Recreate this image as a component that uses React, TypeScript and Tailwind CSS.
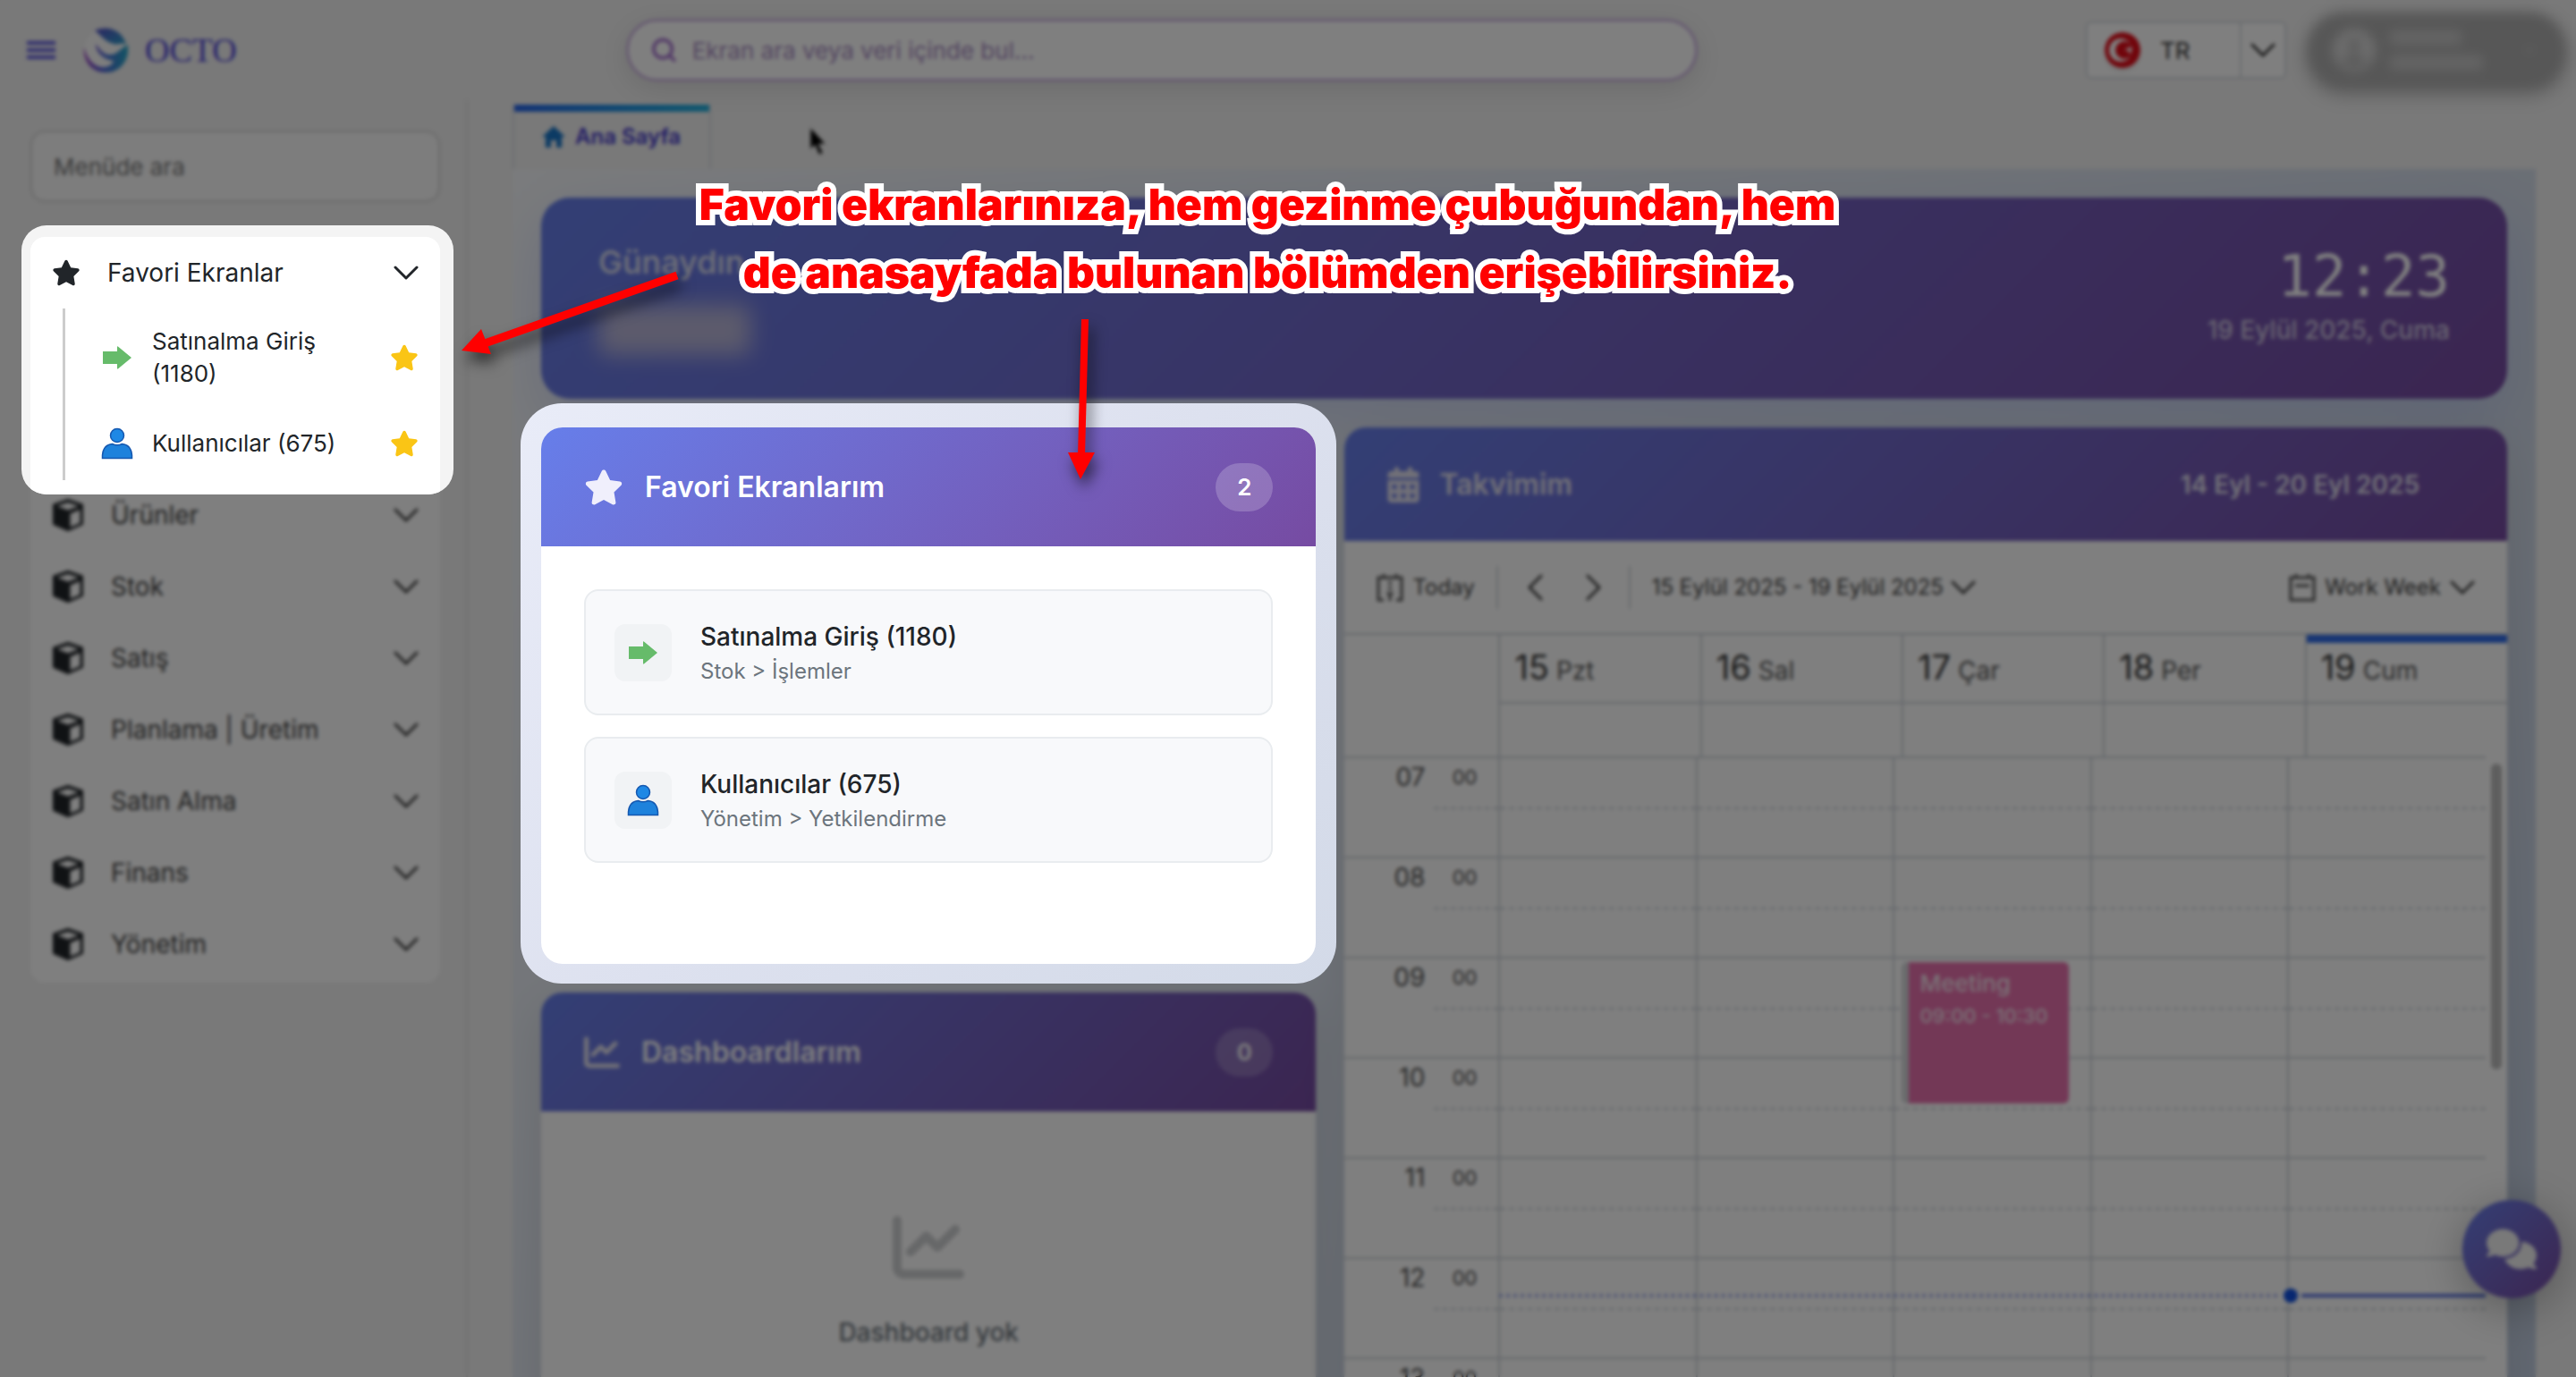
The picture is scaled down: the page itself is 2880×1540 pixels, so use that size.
import type { ReactNode } from "react";
import { ChevronDown, Search } from "lucide-react";
import { FaStar, FaChartLine, FaCalendarDays, FaComments, FaCircleUser } from "react-icons/fa6";
import { IoMdHome } from "react-icons/io";

const modules = ["Ürünler", "Stok", "Satış", "Planlama | Üretim", "Satın Alma", "Finans", "Yönetim"];

const days = [
  { num: "15", name: "Pzt" },
  { num: "16", name: "Sal" },
  { num: "17", name: "Çar" },
  { num: "18", name: "Per" },
  { num: "19", name: "Cum" },
];

const hours = ["07", "08", "09", "10", "11", "12", "13"];

function DownIcon() {
  return (
    <svg viewBox="0 0 28 16" className="h-4 w-7 shrink-0" fill="none" stroke="currentColor" strokeWidth="3" strokeLinecap="round" strokeLinejoin="round" aria-hidden="true">
      <path d="m2 2 12 12L26 2" />
    </svg>
  );
}

function LeftIcon() {
  return (
    <svg viewBox="0 0 18 30" className="h-[30px] w-[18px]" fill="none" stroke="currentColor" strokeWidth="3" strokeLinecap="round" strokeLinejoin="round" aria-hidden="true">
      <path d="M16 2 3 15l13 13" />
    </svg>
  );
}

function RightIcon() {
  return (
    <svg viewBox="0 0 18 30" className="h-[30px] w-[18px]" fill="none" stroke="currentColor" strokeWidth="3" strokeLinecap="round" strokeLinejoin="round" aria-hidden="true">
      <path d="m2 2 13 13L2 28" />
    </svg>
  );
}

function CubeIcon() {
  return (
    <svg viewBox="0 0 36 36" className="size-9 shrink-0" aria-hidden="true">
      <path d="M18 1 34 6.5V28L18 35 2 28V6.5Z" fill="#212529" stroke="#212529" strokeWidth="2" strokeLinejoin="round" />
      <path d="M18 4 30 8 18 12.5 6 8Z" fill="#fff" />
      <path d="M20.500 16.500 31.500 12V27L20.500 31.500Z" fill="#fff" />
    </svg>
  );
}

function ArrowIcon() {
  return (
    <svg viewBox="0 0 36 36" className="size-9 shrink-0" aria-hidden="true">
      <path d="M2 11h16V6.500q0-2 1.500-.5L34 18 19.500 30q-1.500 1.500-1.500-.5V25H2Z" fill="#66bb6a" />
    </svg>
  );
}

function PersonIcon() {
  return (
    <svg viewBox="0 0 36 36" className="size-9 shrink-0" aria-hidden="true">
      <circle cx="18" cy="9" r="7.500" fill="#1e88e5" stroke="#1558b0" strokeWidth="1.500" />
      <path d="M1.500 34.500V31q1-11.500 11-12.500 5.500 2.500 11 0 10 1 11 12.500v3.500Z" fill="#1e82dc" stroke="#1558b0" strokeWidth="1.500" />
    </svg>
  );
}

function Logo() {
  return (
    <svg viewBox="0 0 50 50" className="size-[50px]" aria-hidden="true">
      <defs>
        <linearGradient id="logoTop" x1="0" y1="0" x2="1" y2="1">
          <stop offset="0" stopColor="#5a50c8" />
          <stop offset="1" stopColor="#2aa0c8" />
        </linearGradient>
        <linearGradient id="logoBottom" x1="0" y1="0" x2="1" y2="0">
          <stop offset="0" stopColor="#9a35c0" />
          <stop offset=".45" stopColor="#4f6ad8" />
          <stop offset="1" stopColor="#22a8c8" />
        </linearGradient>
      </defs>
      <circle cx="25" cy="25" r="24" fill="#fbfbfb" />
      <path d="M13 3C28-4 45 4 48 19c-6-3-9 1-14-1C25 16 20 9 13 3Z" fill="url(#logoTop)" />
      <path d="M1 22C4 34 10 42 20 44c8 1 13-3 14-7C24 36 14 28 14 18c6 9 11 13 17 12 7 0 9-6 19-11 2 17-8 31-25 31C10 50 0 38 1 22Z" fill="url(#logoBottom)" />
    </svg>
  );
}

function TodayIcon() {
  return (
    <svg viewBox="0 0 30 32" className="h-8 w-[30px]" fill="none" stroke="#555" strokeWidth="3" aria-hidden="true">
      <path d="M8 30H2V5h26v25h-6M8 1v5M22 1v5M15 9v4" />
      <path d="M15 15v4M15 22v9" />
      <path d="M11 22h8l-4 4Z" fill="#555" strokeWidth="1" />
    </svg>
  );
}

function WorkWeekIcon() {
  return (
    <svg viewBox="0 0 30 32" className="h-8 w-[30px]" fill="none" stroke="#555" strokeWidth="3" aria-hidden="true">
      <path d="M2 5h26v25H2ZM8 1v5M22 1v5M7 14h16" />
    </svg>
  );
}

function Header() {
  return (
    <header className="grid h-[112px] shrink-0 grid-cols-[700px_minmax(0,1fr)_982px] items-center">
      <div className="flex items-center pl-[30px]">
        <button aria-label="Menü" className="flex w-8 flex-col gap-1">
          <span className="h-1 bg-[#5b55dd]" />
          <span className="h-1 bg-[#5b55dd]" />
          <span className="h-1 bg-[#5b55dd]" />
        </button>
        <a href="#" className="ml-[31px] flex items-center gap-[19px]">
          <Logo />
          <span className="font-['Liberation_Serif',serif] text-[38px] leading-none text-[#4c43d6]">OCTO</span>
        </a>
      </div>
      <label className="flex h-[70px] items-center gap-4 rounded-full border-[3px] border-[#cdb4e2] bg-white px-6 shadow-[0_8px_30px_rgba(0,0,0,0.1)]">
        <Search className="size-8 text-[#a877d0]" strokeWidth={3} />
        <input aria-label="Ekran ara" placeholder="Ekran ara veya veri içinde bul..." className="w-full bg-transparent text-[26px] outline-none placeholder:text-[#a58abf]" />
      </label>
      <div className="flex items-center justify-end gap-6 pr-3">
        <div className="flex h-16 w-[224px] items-center rounded-md border-2 border-[#d3d8dd] bg-white">
          <svg viewBox="0 0 40 40" className="ml-[19px] size-10 rounded-full shadow-md" aria-hidden="true">
            <circle cx="20" cy="20" r="20" fill="#e30a17" />
            <circle cx="18" cy="20" r="13" fill="#fff" />
            <circle cx="22" cy="20" r="10" fill="#e30a17" />
            <path d="m22 20 9-4-2 9-5-8 7 4Z" fill="#fff" />
          </svg>
          <span className="ml-[22px] text-[26px] text-[#333]">TR</span>
          <button aria-label="Dil seç" className="ml-auto flex h-full w-[50px] items-center justify-center border-l-2 border-[#d3d8dd] text-[#333]">
            <DownIcon />
          </button>
        </div>
        <div className="w-[288px]">
          <div className="flex h-[84px] items-center gap-4 rounded-[40px] bg-[#aeaeae] px-7 shadow-[0_6px_18px_rgba(0,0,0,0.3)] blur-[6px]">
            <FaCircleUser className="size-12 text-[#dadada]" />
            <div className="flex flex-1 flex-col gap-3">
              <span className="h-4 w-20 rounded bg-[#cacaca]" />
              <span className="h-4 w-26 rounded bg-[#cacaca]" />
            </div>
            <ChevronDown className="size-6 text-[#cccccc]" />
          </div>
        </div>
      </div>
    </header>
  );
}

function FavoriteRow({ icon, label }: { icon: ReactNode; label: string }) {
  return (
    <li className="flex items-center py-3">
      {icon}
      <a href="#" className="ml-[21px] w-[220px] text-[26px] leading-9 text-[#212529]">{label}</a>
      <button aria-label={`${label} favorilerden çıkar`} className="ml-auto">
        <FaStar className="size-8 text-[#fac515]" />
      </button>
    </li>
  );
}

function Sidebar() {
  return (
    <aside className="w-[523px] shrink-0 border-r-2 border-[#e2e2e2] pr-[29px] pl-[34px]">
      <input aria-label="Menüde ara" placeholder="Menüde ara" className="mt-[34px] h-20 w-full rounded-2xl border-2 border-[#d4d4d4] bg-[#fafafa] px-6 text-[26px] outline-none placeholder:text-[#777]" />
      <nav className="mt-[39px] rounded-2xl bg-white pb-[3px]">
        <div className="relative z-20 h-[271px]">
          <div className="absolute -top-[13px] -right-[15px] -bottom-[17px] -left-[10px] overflow-hidden rounded-[28px] bg-[#f4f4f4] pt-[13px] pr-[15px] pl-[10px]">
            <div className="h-full rounded-t-2xl bg-white" />
          </div>
          <div className="relative">
            <button className="flex h-20 w-full items-center pr-6 pl-6 text-[28px] text-[#212529]">
              <FaStar className="size-8" />
              <span className="ml-[30px]">Favori Ekranlar</span>
              <span className="ml-auto"><DownIcon /></span>
            </button>
            <ul className="ml-9 flex h-[192px] flex-col gap-[18px] border-l-[3px] border-[#ccc] pt-[7px] pr-6 pl-10">
              <FavoriteRow icon={<ArrowIcon />} label="Satınalma Giriş (1180)" />
              <FavoriteRow icon={<PersonIcon />} label="Kullanıcılar (675)" />
            </ul>
          </div>
        </div>
        {modules.map((name) => (
          <button key={name} className="flex h-20 w-full items-center pr-6 pl-6 text-[28px] text-[#404040]">
            <CubeIcon />
            <span className="ml-[30px]">{name}</span>
            <span className="ml-auto"><DownIcon /></span>
          </button>
        ))}
      </nav>
    </aside>
  );
}

function Banner() {
  return (
    <section className="flex h-[225px] shrink-0 justify-between rounded-[32px] bg-linear-135 from-[#667eea] to-[#764ba2] px-16 shadow-[0_20px_60px_rgba(102,126,234,0.2)]">
      <div className="pt-12">
        <h1 className="text-[36px] leading-[48px] font-medium text-[#e0e2f2]">Günaydın,</h1>
        <div className="mt-6 h-14 w-[170px] rounded-lg bg-[#b9b6d8] blur-md" />
      </div>
      <div className="pt-12 text-right">
        <p className="font-['DejaVu_Sans_Mono',monospace] text-[64px] leading-[80px] text-white">12:23</p>
        <p className="text-[28px] leading-10 font-medium text-[#d0c8e2]">19 Eylül 2025, Cuma</p>
      </div>
    </section>
  );
}

function CardHeader({ icon, title, count }: { icon: ReactNode; title: string; count: string }) {
  return (
    <div className="flex h-[133px] items-center bg-linear-135 from-[#667eea] to-[#764ba2] px-12 text-white">
      {icon}
      <h2 className="ml-6 text-[32px] font-semibold">{title}</h2>
      <span className="ml-auto flex h-[54px] w-16 items-center justify-center rounded-full bg-white/20 text-[26px] font-semibold">{count}</span>
    </div>
  );
}

function FavoriteItem({ icon, title, path }: { icon: ReactNode; title: string; path: string }) {
  return (
    <a href="#" className="flex h-[141px] items-center rounded-2xl border-2 border-[#e9ecef] bg-[#f8f9fb] px-8">
      <span className="flex size-16 items-center justify-center rounded-xl bg-[#f1f3f5]">{icon}</span>
      <span className="ml-8 flex flex-col">
        <span className="text-[28px] leading-[42px] font-medium text-[#212529]">{title}</span>
        <span className="text-[24px] leading-9 text-[#6c757d]">{path}</span>
      </span>
    </a>
  );
}

function FavoritesCard() {
  return (
    <section className="relative z-20">
      <div className="absolute -inset-x-[23px] -top-[27px] -bottom-[22px] rounded-[46px] bg-linear-135 from-[#e9ecf8] via-[#dde1ef] to-[#d3dae8]" />
      <div className="relative h-[600px] overflow-hidden rounded-3xl bg-white">
        <CardHeader icon={<FaStar className="size-11 text-[#f0effc]" />} title="Favori Ekranlarım" count="2" />
        <div className="flex flex-col gap-6 p-12">
          <FavoriteItem icon={<ArrowIcon />} title="Satınalma Giriş (1180)" path="Stok > İşlemler" />
          <FavoriteItem icon={<PersonIcon />} title="Kullanıcılar (675)" path="Yönetim > Yetkilendirme" />
        </div>
      </div>
    </section>
  );
}

function DashboardCard() {
  return (
    <section className="h-[600px] overflow-hidden rounded-3xl bg-white shadow-[0_16px_50px_rgba(0,0,0,0.1)]">
      <CardHeader icon={<FaChartLine className="size-10 text-[#e6e4f0]" />} title="Dashboardlarım" count="0" />
      <div className="flex flex-col items-center pt-[112px]">
        <FaChartLine className="size-20 text-[#ced0d2]" />
        <p className="mt-[34px] text-[28px] font-medium text-[#6c757d]">Dashboard yok</p>
      </div>
    </section>
  );
}

function Calendar() {
  return (
    <section className="h-[1232px] overflow-hidden rounded-3xl bg-white shadow-[0_16px_50px_rgba(0,0,0,0.1)]">
      <div className="flex h-[127px] items-center bg-linear-135 from-[#667eea] to-[#764ba2] pr-[98px] pl-[46px] text-[#e4e2f0]">
        <FaCalendarDays className="size-10" />
        <h2 className="ml-5 text-[32px] font-semibold">Takvimim</h2>
        <p className="ml-auto text-[28px] font-semibold">14 Eyl - 20 Eyl 2025</p>
      </div>
      <div className="flex h-[103px] items-center pr-9 pl-9 text-[24px] text-[#404040]">
        <button className="flex items-center gap-[10px]"><TodayIcon />Today</button>
        <span className="ml-6 h-12 w-0.5 bg-[#d0d4d8]" />
        <button aria-label="Önceki" className="ml-8"><LeftIcon /></button>
        <button aria-label="Sonraki" className="ml-12"><RightIcon /></button>
        <span className="ml-[30px] h-12 w-0.5 bg-[#d0d4d8]" />
        <button className="ml-6 flex items-center gap-2">15 Eylül 2025 - 19 Eylül 2025<DownIcon /></button>
        <button className="ml-auto flex items-center gap-[10px]"><WorkWeekIcon />Work Week<DownIcon /></button>
      </div>
      <table aria-label="Takvim günleri" className="w-full table-fixed border-collapse border-t-2 border-[#cbd1d7]">
        <thead>
          <tr className="h-[77px]">
            <td rowSpan={2} className="w-[173px]" />
            {days.map((d, i) => (
              <th
                key={d.num}
                className={i === 4
                  ? "border-l-2 border-[#cbd1d7] pl-4 text-left font-normal shadow-[inset_0_9px_0_#2f6be8]"
                  : "border-l-2 border-[#cbd1d7] pl-4 text-left font-normal"}
              >
                <span className="text-[38px] leading-10 text-[#333]">{d.num}</span>
                <span className="ml-2 text-[28px] leading-10 text-[#555]">{d.name}</span>
              </th>
            ))}
          </tr>
          <tr className="h-[60px]">
            {days.map((d) => <td key={d.num} className="border-t-2 border-l-2 border-[#cbd1d7]" />)}
          </tr>
        </thead>
      </table>
      <div className="relative pr-6">
        <table aria-label="Takvim saatleri" className="w-full table-fixed border-collapse">
          <tbody>
            {hours.map((h) => (
              <tr key={h} className="h-28 border-t-2 border-[#cbd1d7]">
                <th className="w-[173px] p-0 align-top font-normal">
                  <div className="ml-[100px] h-[57px] border-b-2 border-dashed border-[#cbd1d7]">
                    <div className="-ml-[100px] flex items-center justify-end pr-6 text-[#4c4c4c]">
                      <span className="text-[28px] leading-[42px]">{h}</span>
                      <span className="w-[58px] text-right text-[22px] leading-[42px]">00</span>
                    </div>
                  </div>
                </th>
                {days.map((d) => (
                  <td key={d.num} className="border-l-2 border-[#cbd1d7] p-0 align-top">
                    <div className="relative h-[57px] border-b-2 border-dashed border-[#cbd1d7]">
                      {h === "09" && d.num === "17" && (
                        <div className="absolute top-1 right-6 left-2 h-[158px] rounded-md border-l-8 border-[#d5d7da] bg-[#e770ad] pt-1 pl-3 text-[#f6e4ee]">
                          <p className="text-[26px] leading-10 font-medium">Meeting</p>
                          <p className="text-[22px] leading-8 font-medium">09:00 - 10:30</p>
                        </div>
                      )}
                    </div>
                  </td>
                ))}
              </tr>
            ))}
          </tbody>
        </table>
        <div className="absolute top-[595px] right-6 left-[173px] flex items-center">
          <span className="w-[79%] border-t-4 border-dotted border-[#8f9ce8]" />
          <span className="ml-1.5 size-4 rounded-full bg-[#0f4fe0]" />
          <span className="ml-1 flex-1 border-t-4 border-[#5b74e0]" />
        </div>
        <div className="absolute top-2 right-1.5 h-[342px] w-3 rounded-full bg-[#bdbdbd]" />
      </div>
    </section>
  );
}

function Annotation() {
  return (
    <div className="pointer-events-none absolute inset-0 z-30">
      <svg viewBox="0 0 280 130" className="absolute top-[290px] left-[500px] h-[130px] w-[280px] drop-shadow-[4px_10px_8px_rgba(0,0,0,0.6)]" aria-hidden="true">
        <path d="M257 18 42 94" stroke="#f00" strokeWidth="9" />
        <path d="M16 102 38 78 49 106Z" fill="#f00" />
      </svg>
      <svg viewBox="0 0 60 200" className="absolute top-[350px] left-[1180px] h-[200px] w-[60px] drop-shadow-[4px_10px_8px_rgba(0,0,0,0.6)]" aria-hidden="true">
        <path d="M33 7 29 160" stroke="#f00" strokeWidth="8" />
        <path d="M28 186 14 156H44Z" fill="#f00" />
      </svg>
      <p className="absolute top-[191px] left-[717px] w-[1400px] text-center text-[48px] leading-[76px] font-black text-[#f00] [-webkit-text-stroke:12px_#fff] [paint-order:stroke_fill] [stroke-linejoin:round]">
        Favori ekranlarınıza, hem gezinme çubuğundan, hem<br />de anasayfada bulunan bölümden erişebilirsiniz.
      </p>
    </div>
  );
}

export default function App() {
  return (
    <div className="relative flex h-screen flex-col overflow-hidden bg-[#f2f2f2] font-['Inter',sans-serif]">
      <Header />
      <div className="flex min-h-0 flex-1">
        <Sidebar />
        <main className="flex min-w-0 flex-1 flex-col pr-[45px] pl-[50px]">
          <div className="flex h-[77px] shrink-0 pt-[5px]">
            <button className="flex h-full w-[222px] flex-col border-x-2 border-[#d9dce4]">
              <span className="h-2 w-full bg-linear-to-r from-[#2563e8] to-[#23b0dc]" />
              <span className="flex flex-1 items-center gap-2 pb-2 pl-7 text-[24px] font-semibold text-[#4338ca]">
                <IoMdHome className="size-8 text-[#1976c8]" />
                Ana Sayfa
              </span>
            </button>
          </div>
          <div className="flex min-h-0 flex-1 flex-col gap-8 overflow-hidden bg-linear-135 from-[#f5f7fa] to-[#c3cfe2] px-8 pt-8">
            <Banner />
            <div className="grid grid-cols-[minmax(0,2fr)_minmax(0,3fr)] gap-8">
              <div className="flex flex-col gap-8">
                <FavoritesCard />
                <DashboardCard />
              </div>
              <Calendar />
            </div>
          </div>
        </main>
      </div>
      <button aria-label="Sohbet" className="absolute right-[17px] bottom-[88px] flex size-[110px] items-center justify-center rounded-full bg-linear-135 from-[#667eea] to-[#764ba2] shadow-[0_10px_50px_rgba(0,0,0,0.3)]">
        <FaComments className="size-14 text-[#f2f2f2]" />
      </button>
      <svg viewBox="0 0 20 32" className="absolute top-[142px] left-[905px] h-8 w-5" aria-hidden="true">
        <path d="M1 1v24l5-5 5 11 4-2-5-10h8Z" fill="#000" stroke="#ccc" />
      </svg>
      <div className="pointer-events-none absolute inset-0 z-10 bg-black/50 backdrop-blur-[2px]" />
      <Annotation />
    </div>
  );
}
